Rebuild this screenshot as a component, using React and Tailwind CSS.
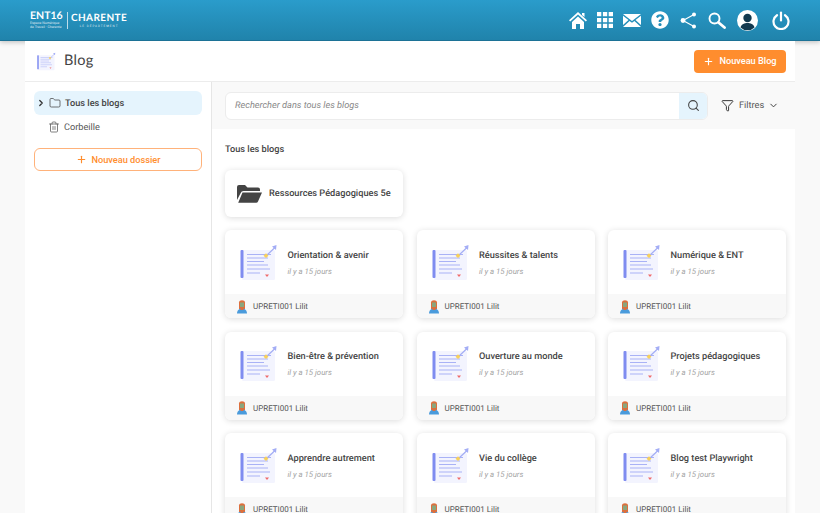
import React from 'react';
import { FaQuestionCircle } from 'react-icons/fa';
import { Plus, Folder, Trash2, ChevronRight, ChevronDown, Search, Filter } from 'lucide-react';

const blogs = [
  'Orientation & avenir',
  'Réussites & talents',
  'Numérique & ENT',
  'Bien-être & prévention',
  'Ouverture au monde',
  'Projets pédagogiques',
  'Apprendre autrement',
  'Vie du collège',
  'Blog test Playwright',
];

const BlogIcon = ({ className }) => (
  <svg viewBox="0 0 38 37" className={className}>
    <rect x="2" y="6" width="33" height="30" rx="1.5" fill="#f3f4fe" />
    <rect x="0.5" y="6" width="3" height="28" rx="1" fill="#7f8cf0" />
    <path d="M7 10.5h24M7 14h21M7 17.5h17M7 21h21M7 25h23M7 29h13" stroke="#a9b2f6" strokeWidth="1" fill="none" />
    <path d="M26 12 35 3.5" stroke="#a3adf5" strokeWidth="1.2" fill="none" />
    <path d="M32 2.5 36.5 1 36 6z" fill="#a3adf5" />
    <rect x="24.5" y="10" width="3.5" height="3.5" transform="rotate(-45 26 12)" fill="#f7d05c" />
    <path d="M25 30.5h4l-2 2.5z" fill="#ef6a6a" />
  </svg>
);

const UserAvatar = () => (
  <svg viewBox="0 0 12 15" className="w-3 h-[15px] shrink-0">
    <path d="M3 3.500C3 .5 9 .5 9 3.500V10H3z" fill="#dd6f3c" />
    <rect x="4" y="3.500" width="4" height="4.500" fill="#8aa67e" />
    <path d="M1 14.500c0-3 2-5 5-5s5 2 5 5z" fill="#4a9bdc" />
    <rect x="4.500" y="9" width="3" height="2" fill="#dd6f3c" />
  </svg>
);

const HeaderIcons = () => (
  <div className="flex items-center">
    <svg viewBox="0 0 18 17" className="w-[18px] h-[17px] mr-[10px]" fill="#fff">
      <path d="M9 0 18 8.300l-1.200 1.300L9 2.500 1.200 9.600 0 8.300 9 0z" />
      <path d="M13 1h2.500v4L13 3z" />
      <path d="M3 10 9 4.500 15 10v7h-4v-5H7v5H3z" />
    </svg>
    <svg viewBox="0 0 16 16" className="w-4 h-4 mr-[10px]" fill="#fff">
      <path d="M0 0h4.300v4.300H0zM5.900 0h4.300v4.300H5.900zM11.700 0H16v4.300h-4.300zM0 5.900h4.300v4.300H0zM5.900 5.900h4.300v4.300H5.900zM11.700 5.900H16v4.300h-4.300zM0 11.700h4.300V16H0zM5.900 11.700h4.300V16H5.900zM11.700 11.700H16V16h-4.300z" />
    </svg>
    <svg viewBox="0 0 18 13" className="w-[18px] h-[13px] mr-[10px]" fill="#fff">
      <path d="M0 0h18L9 7zM0 1.800 5.500 6 0 11zM18 1.800 12.500 6 18 11zM6.600 6.900 9 8.800l2.400-1.900L18 13H0z" />
    </svg>
    <FaQuestionCircle className="w-[18px] h-[18px] text-white mr-[10px]" />
    <svg viewBox="0 0 18 17" className="w-[18px] h-[17px] mr-[11px]" fill="#fff" stroke="#fff">
      <path d="M4 8.500 15 2.500M4 8.500 15 14.500" strokeWidth="1.200" fill="none" />
      <circle cx="4" cy="8.500" r="2.400" stroke="none" />
      <circle cx="15" cy="2.500" r="2" stroke="none" />
      <circle cx="15" cy="14.500" r="2" stroke="none" />
    </svg>
    <svg viewBox="0 0 18 17" className="w-[18px] h-[17px] mr-[11px]" fill="none" stroke="#fff">
      <circle cx="6.500" cy="6.500" r="5" strokeWidth="1.900" />
      <path d="M10.500 10.500 16.500 15.500" strokeWidth="2.800" strokeLinecap="round" />
    </svg>
    <svg viewBox="0 0 21 21" className="w-[21px] h-[21px] mr-[14px]">
      <circle cx="10.500" cy="10.500" r="10.500" fill="#fff" />
      <circle cx="10.500" cy="8" r="4.200" fill="#12394f" />
      <path d="M3.500 17.500c1-3.500 4-4.500 7-4.500s6 1 7 4.500a10 10 0 0 1-14 0z" fill="#12394f" />
    </svg>
    <svg viewBox="0 0 18 19" className="w-[18px] h-[19px]" fill="none" stroke="#fff" strokeWidth="2.200" strokeLinecap="round">
      <path d="M9 1.500v8" />
      <path d="M5 4.200a7.500 7.500 0 1 0 8 0" />
    </svg>
  </div>
);

const BlogCard = ({ title }) => (
  <div className="h-[88px] bg-white rounded-md shadow-[0_1px_6px_rgba(0,0,0,0.14)] flex flex-col overflow-hidden">
    <div className="h-[64px] flex items-center pl-[15px] shrink-0">
      <BlogIcon className="w-[38px] h-[37px] shrink-0" />
      <div className="ml-[9.500px] mt-[3px]">
        <div className="text-[9.200px] font-medium text-[#444] leading-[16px]">{title}</div>
        <div className="text-[7.800px] italic text-[#a3a3a3] leading-[16px]">il y a 15 jours</div>
      </div>
    </div>
    <div className="flex-1 bg-[#f8f8f8] flex items-center pl-[11px] gap-[5px]">
      <UserAvatar />
      <span className="text-[8px] text-[#555] pt-[2px]">UPRETI001 Lilit</span>
    </div>
  </div>
);

const App = () => {
  return (
    <div className="h-screen overflow-hidden bg-[#f9f9f9] font-['Roboto',sans-serif] [text-rendering:geometricPrecision]">
      <header className="h-[41px] bg-gradient-to-b from-[#2a9ccb] to-[#2083ab] border-b border-[#1c7296] shadow-[0_1px_5px_rgba(0,0,0,0.25)] flex items-center justify-between pl-[30px] pr-[30px]">
        <div className="flex items-center text-white">
          <div className="w-[34px]">
            <div className="text-[10.500px] font-bold leading-[11px] font-['Lato',sans-serif]">ENT16</div>
            <div className="text-[3.500px] leading-[3.500px] opacity-80 whitespace-nowrap">Espace Numérique</div>
            <div className="text-[3.500px] leading-[3.500px] opacity-80 whitespace-nowrap">de Travail · Charente</div>
          </div>
          <div className="w-px h-[17px] bg-white/70 mx-[3px]" />
          <div>
            <div className="text-[10px] font-bold leading-[11px] tracking-[0.4px] font-['Lato',sans-serif]">CHARENTE</div>
            <div className="text-[3px] leading-[4px] text-center tracking-[1px] opacity-80">LE DÉPARTEMENT</div>
          </div>
        </div>
        <HeaderIcons />
      </header>

      <div className="mx-[25px] w-[770px]">
        <div className="h-[41px] bg-white border-b border-[#ececec] flex items-center justify-between pl-[12px] pr-[9px]">
          <div className="flex items-center">
            <BlogIcon className="w-[19px] h-[19px]" />
            <span className="ml-[8px] text-[14.500px] text-[#444] font-['Lato',sans-serif] tracking-[0.3px] -mt-[1px]">Blog</span>
          </div>
          <button className="h-[23px] w-[92px] rounded bg-[#ff8d2e] text-white text-[9.200px] font-medium flex items-center justify-center gap-[5px]">
            <Plus className="w-[11px] h-[11px]" strokeWidth={2.5} />
            Nouveau Blog
          </button>
        </div>

        <div className="flex h-[450px]">
          <aside className="w-[187px] shrink-0 bg-white border-r border-[#e6e6e6] pt-[9px] pl-[9px] pr-[9px]">
            <div className="h-6 rounded-md bg-[#e5f4fd] flex items-center text-[#444] text-[9.200px] font-medium">
              <ChevronRight className="w-[10px] h-[10px] ml-[2px] text-[#333]" strokeWidth={3} />
              <Folder className="w-3 h-3 ml-[3px]" strokeWidth={1.5} />
              <span className="ml-[4px] pt-[2px]">Tous les blogs</span>
            </div>
            <div className="h-6 flex items-center text-[#555] text-[9.200px]">
              <Trash2 className="w-3 h-3 ml-[14px]" strokeWidth={1.5} />
              <span className="ml-[4px] pt-[2px]">Corbeille</span>
            </div>
            <button className="mt-[9px] w-full h-[23px] rounded-md border border-[#ffb27a] bg-white text-[#ff8d2e] text-[9.200px] font-medium flex items-center justify-center gap-[5px]">
              <Plus className="w-[11px] h-[11px]" strokeWidth={2.5} />
              Nouveau dossier
            </button>
          </aside>

          <main className="flex-1 min-w-0">
            <div className="h-[47px] flex items-center pl-[13px] pr-[9px]">
              <div className="w-[483px] h-[28px] flex bg-white border border-[#ececec] rounded-md overflow-hidden">
                <div className="flex-1 flex items-center pl-[9px] text-[9.200px] italic text-[#888]">Rechercher dans tous les blogs</div>
                <div className="w-[28px] bg-[#e5f4fd] flex items-center justify-center">
                  <Search className="w-[13px] h-[13px] text-[#444]" />
                </div>
              </div>
              <div className="flex items-center ml-[13px] text-[#555] text-[9.200px]">
                <Filter className="w-[13px] h-[13px] text-[#333]" strokeWidth={1.8} />
                <span className="ml-[5px]">Filtres</span>
                <ChevronDown className="w-[11px] h-[11px] ml-[4px] text-[#333]" strokeWidth={2} />
              </div>
            </div>

            <div className="bg-white h-full pl-[13px] pr-[9px] pt-[14px]">
              <div className="text-[9.200px] font-medium text-[#444] leading-[13px]">Tous les blogs</div>
              <div className="mt-[14px] w-[178px] h-[47px] rounded-md bg-white shadow-[0_1px_6px_rgba(0,0,0,0.14)] flex items-center pl-[12px]">
                <svg viewBox="0 0 25 18" className="w-[25px] h-[18px] shrink-0" fill="#444">
                  <path d="M0 2a2 2 0 0 1 2-2h6l2.500 2.500H21a2 2 0 0 1 2 2V6H6.500a3 3 0 0 0-2.800 2L0 15z" />
                  <path d="M5.500 7.500H25L21 16.500a2 2 0 0 1-1.800 1.200H1.200z" />
                </svg>
                <span className="ml-[7px] text-[9.200px] font-medium text-[#444] whitespace-nowrap">Ressources Pédagogiques 5e</span>
              </div>
              <div className="mt-[13px] grid grid-cols-3 gap-x-[13.500px] gap-y-[13.500px]">
                {blogs.map((title) => (
                  <BlogCard key={title} title={title} />
                ))}
              </div>
            </div>
          </main>
        </div>
      </div>
    </div>
  );
};

export default App;
